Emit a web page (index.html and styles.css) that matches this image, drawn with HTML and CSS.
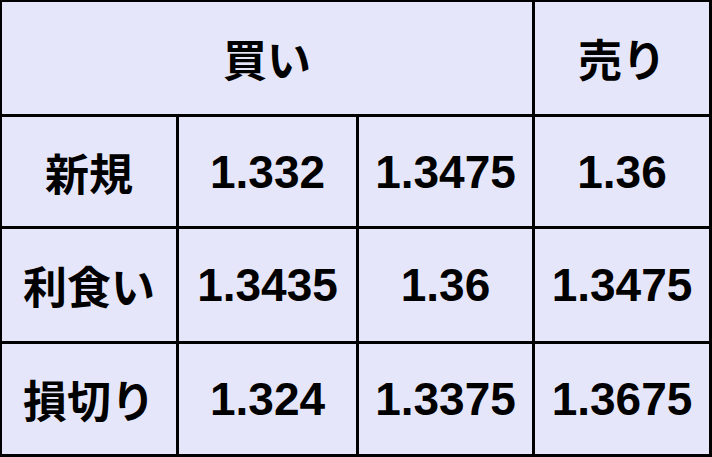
FILE: index.html
```html
<!DOCTYPE html>
<html lang="ja">
<head>
<meta charset="utf-8">
<link rel="stylesheet" href="styles.css">
</head>
<body>
<table class="grid">
  <colgroup>
    <col class="c1"><col class="c2"><col class="c3"><col class="c4">
  </colgroup>
  <tr class="r1">
    <th class="jp" colspan="3">買い</th>
    <th class="jp">売り</th>
  </tr>
  <tr class="r2">
    <th class="jp">新規</th>
    <td>1.332</td>
    <td>1.3475</td>
    <td>1.36</td>
  </tr>
  <tr class="r3">
    <th class="jp">利食い</th>
    <td>1.3435</td>
    <td>1.36</td>
    <td>1.3475</td>
  </tr>
  <tr class="r4">
    <th class="jp">損切り</th>
    <td>1.324</td>
    <td>1.3375</td>
    <td>1.3675</td>
  </tr>
</table>
</body>
</html>
```

FILE: styles.css
```css
html, body {
  margin: 0;
  padding: 0;
  background: #e6e6fa;
}
.grid {
  box-sizing: border-box;
  width: 712px;
  height: 457px;
  border-collapse: separate;
  border-spacing: 0;
  table-layout: fixed;
  background: #e6e6fa;
  border-top: 2px solid #000;
  border-left: 2px solid #000;
}
.c1 { width: 177px; }
.c2 { width: 180px; }
.c3 { width: 176px; }
.c4 { width: 177px; }
.grid th, .grid td {
  box-sizing: border-box;
  border-right: 3px solid #000;
  border-bottom: 3px solid #000;
  padding: 0;
  text-align: center;
  vertical-align: middle;
  color: #000;
  font-family: "Liberation Sans", Arial, sans-serif;
  font-weight: 700;
  font-size: 46px;
  line-height: 1;
}
.grid .jp {
  font-family: "Noto Sans CJK JP", sans-serif;
  font-weight: 700;
  font-size: 44px;
}
.r1 { height: 115px; }
.r2 { height: 112px; }
.r3 { height: 115px; }
.r4 { height: 113px; }
```
